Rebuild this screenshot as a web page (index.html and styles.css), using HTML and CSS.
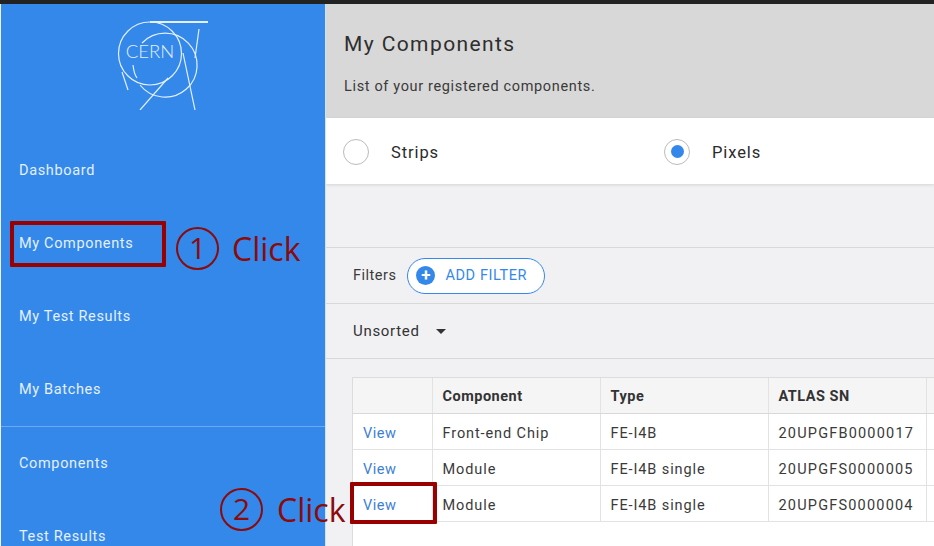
FILE: index.html
```html
<!DOCTYPE html>
<html lang="en">
<head>
    <meta charset="UTF-8">
    <meta name="viewport" content="width=device-width, initial-scale=1.0">
    <title>My Components</title>
    <link rel="stylesheet" href="styles.css">
</head>
<body>
    <div class="topbar"></div>
    <div class="app">
        <nav class="sidebar">
            <div class="logo">
                <svg width="100" height="100" viewBox="0 0 100 100" fill="none" stroke="#e4f0fd" stroke-width="1.2">
                    <circle cx="40" cy="43.500" r="31.500"/>
                    <path d="M32 33 A32 32 0 1 1 30 75"/>
                    <path d="M23 55 Q24 64 27 68"/>
                    <path d="M40 12 H98" stroke-width="1.800"/>
                    <path d="M89 19 L85 48"/>
                    <path d="M30 100 L58 68"/>
                    <path d="M73 43 L85 100"/>
                    <path d="M12 62 L18 80"/>
                    <text x="40" y="48" text-anchor="middle" class="logo-text">CERN</text>
                </svg>
            </div>
            <a class="nav-item first">Dashboard</a>
            <a class="nav-item">My Components</a>
            <a class="nav-item">My Test Results</a>
            <a class="nav-item">My Batches</a>
            <div class="nav-sep"></div>
            <a class="nav-item">Components</a>
            <a class="nav-item">Test Results</a>
        </nav>
        <main class="content">
            <header class="page-head">
                <h1>My Components</h1>
                <p>List of your registered components.</p>
            </header>
            <div class="radios">
                <label class="radio-item"><span class="radio"></span><span class="radio-label">Strips</span></label>
                <label class="radio-item"><span class="radio checked"></span><span class="radio-label">Pixels</span></label>
            </div>
            <div class="spacer"></div>
            <div class="filters">
                <span>Filters</span>
                <button class="add-filter"><span class="plus">+</span>ADD FILTER</button>
            </div>
            <div class="sort">Unsorted <span class="caret"></span></div>
            <div class="table-wrap">
                <table>
                    <thead>
                        <tr><th class="c1"></th><th class="c2">Component</th><th class="c3">Type</th><th class="c4">ATLAS SN</th><th></th></tr>
                    </thead>
                    <tbody>
                        <tr><td><a>View</a></td><td>Front-end Chip</td><td>FE-I4B</td><td class="sn">20UPGFB0000017</td><td></td></tr>
                        <tr><td><a>View</a></td><td>Module</td><td>FE-I4B single</td><td class="sn">20UPGFS0000005</td><td></td></tr>
                        <tr><td><a>View</a></td><td>Module</td><td>FE-I4B single</td><td class="sn">20UPGFS0000004</td><td></td></tr>
                    </tbody>
                </table>
            </div>
        </main>
    </div>

    <!-- annotations on top of the screenshot -->
    <div class="mark mark-nav"></div>
    <div class="note note-1"><span class="num">1</span><span class="click">Click</span></div>
    <div class="mark mark-view"></div>
    <div class="note note-2"><span class="num">2</span><span class="click">Click</span></div>
</body>
</html>
```

FILE: styles.css
```css
html, body {
    height: 100%;
}

body {
    margin: 0;
    font-family: Roboto, "Noto Sans", sans-serif;
    letter-spacing: 0.5px;
    background-color: #f1f1f4;
    color: #2b2b2b;
    overflow: hidden;
    display: flex;
    flex-direction: column;
}

.topbar {
    height: 4px;
    background: #222;
    flex: none;
}

.app {
    display: flex;
    flex: 1;
    min-height: 0;
}

.sidebar {
    width: 324px;
    margin-left: 1px;
    flex: none;
    background: #3388ea;
    border-right: 1px solid #cfe2f8;
    overflow: hidden;
    color: #e4f0fd;
}

.logo {
    height: 111px;
    padding-left: 109px;
    padding-top: 6px;
    box-sizing: border-box;
}

.logo svg {
    display: block;
}

.logo-text {
    font-family: Lato, sans-serif;
    font-weight: 300;
    font-size: 18.500px;
    letter-spacing: 0;
    fill: #e4f0fd;
    stroke: none;
}

.nav-item {
    display: block;
    height: 73.100px;
    line-height: 73.100px;
    padding-left: 18px;
    font-size: 14.500px;
    letter-spacing: 0.65px;
    white-space: nowrap;
}

.nav-item.first {
    margin-top: 19px;
}

.nav-sep {
    height: 1px;
    background: #6aaaf2;
}

.content {
    flex: 1;
    min-width: 0;
    display: flex;
    flex-direction: column;
    overflow: hidden;
}

.page-head {
    height: 114px;
    flex: none;
    background: #d8d8d8;
    padding: 26px 18px 0;
    box-sizing: border-box;
}

.page-head h1 {
    margin: 0;
    font-size: 21px;
    font-weight: 400;
    line-height: 28px;
    letter-spacing: 1.4px;
    color: #2e2e2e;
}

.page-head p {
    margin: 19px 0 0;
    font-size: 14.500px;
    letter-spacing: 0.65px;
    line-height: 20px;
    color: #3a3a3a;
}

.radios {
    height: 66px;
    flex: none;
    background: #fff;
    display: flex;
    align-items: center;
    padding: 1px 0 0 17px;
    box-sizing: border-box;
    box-shadow: 0 1px 3px rgba(0, 0, 0, 0.12);
    position: relative;
    font-size: 16.500px;
    letter-spacing: 0.9px;
}

.radio-item {
    display: flex;
    align-items: center;
    flex: none;
    width: 321px;
    gap: 22px;
}

.radio-label {
    padding-top: 2px;
}

.radio {
    width: 26px;
    height: 26px;
    border: 1px solid #bbb;
    border-radius: 50%;
    background: #fff;
    box-sizing: border-box;
    display: flex;
    align-items: center;
    justify-content: center;
}

.radio.checked::after {
    content: "";
    width: 13px;
    height: 13px;
    border-radius: 50%;
    background: #3388ea;
}

.spacer {
    height: 63px;
    flex: none;
}

.filters {
    height: 57px;
    flex: none;
    border-top: 1px solid #d8d8d8;
    border-bottom: 1px solid #d8d8d8;
    box-sizing: border-box;
    display: flex;
    align-items: center;
    padding-left: 27px;
    gap: 11px;
    font-size: 14.500px;
    color: #3a3a3a;
}

.add-filter {
    display: flex;
    align-items: center;
    flex: none;
    width: 138px;
    height: 36px;
    padding: 0 0 0 8px;
    background: #fff;
    border: 1px solid #3388ea;
    border-radius: 18px;
    color: #3388ea;
    font-family: inherit;
    font-size: 14.500px;
    letter-spacing: 0.6px;
    gap: 10px;
}

.plus {
    width: 19px;
    height: 19px;
    border-radius: 50%;
    background: #3388ea;
    color: #fff;
    font-size: 17px;
    font-weight: 700;
    line-height: 18px;
    text-align: center;
    letter-spacing: 0;
}

.sort {
    height: 55px;
    flex: none;
    border-bottom: 1px solid #d8d8d8;
    box-sizing: border-box;
    padding-left: 27px;
    display: flex;
    align-items: center;
    font-size: 15px;
    letter-spacing: 0.7px;
    color: #333;
    gap: 16px;
}

.caret {
    width: 0;
    height: 0;
    border-left: 5px solid transparent;
    border-right: 5px solid transparent;
    border-top: 5px solid #333;
}

.table-wrap {
    margin: 18px 0 0 26px;
    background: #fff;
    border-left: 1px solid #dcdcdc;
    border-top: 1px solid #dcdcdc;
    flex: 1;
    min-height: 0;
    overflow: hidden;
}

table {
    border-collapse: collapse;
    table-layout: fixed;
    width: 100%;
    font-size: 14.500px;
    letter-spacing: 0.9px;
}

th, td {
    height: 36px;
    padding: 4px 9px 0 10px;
    box-sizing: border-box;
    border-right: 1px solid #e2e2e2;
    border-bottom: 1px solid #e2e2e2;
    text-align: left;
    white-space: nowrap;
    overflow: hidden;
}

th:last-child, td:last-child {
    border-right: 0;
    padding: 0;
}

th {
    height: 35px;
    padding-top: 2px;
    background: #f5f5f6;
    font-weight: 700;
    letter-spacing: 0.5px;
    color: #333;
    border-bottom: 1px solid #d8d8d8;
}

td {
    color: #3a3a3a;
}

td a {
    color: #3d7fd6;
    letter-spacing: 0.5px;
}

td.sn {
    letter-spacing: 1.2px;
}

.c1 { width: 79px; }
.c2 { width: 168px; }
.c3 { width: 168px; }
.c4 { width: 158px; }

.mark {
    position: absolute;
    border: 4px solid #990000;
    box-sizing: border-box;
    border-radius: 1px;
}

.mark-nav {
    left: 10px;
    top: 221px;
    width: 156px;
    height: 46px;
}

.mark-view {
    left: 350px;
    top: 482px;
    width: 87px;
    height: 42px;
}

.note {
    position: absolute;
    display: flex;
    align-items: center;
    color: #8b0a0a;
    font-family: "Open Sans", sans-serif;
    letter-spacing: 0;
}

.note-1 {
    left: 176px;
    top: 227px;
    gap: 13px;
}

.note-2 {
    left: 220px;
    top: 488px;
    gap: 14px;
}

.num {
    width: 43px;
    height: 43px;
    border: 2px solid #8b0a0a;
    border-radius: 50%;
    box-sizing: border-box;
    font-size: 30px;
    line-height: 38px;
    text-align: center;
}

.click {
    font-size: 32px;
    line-height: 43px;
}
```
